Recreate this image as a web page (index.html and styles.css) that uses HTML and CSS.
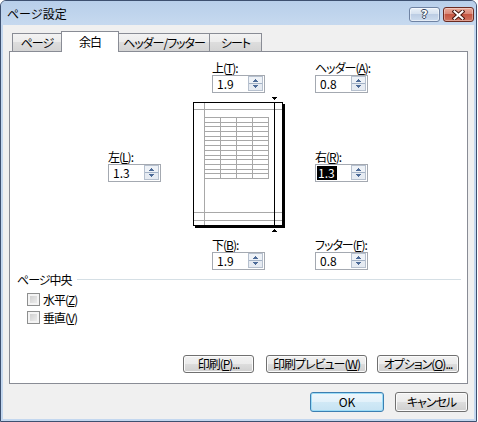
FILE: index.html
```html
<!DOCTYPE html>
<html lang="ja">
<head>
<meta charset="utf-8">
<title>ページ設定</title>
<link rel="stylesheet" href="styles.css">
</head>
<body>
<div class="window">
  <div class="titlebar">
    <span class="title">ページ設定</span>
    <div class="caption">
      <div class="cap-btn help"><span>?</span></div>
      <div class="cap-btn close">
        <svg width="13" height="10" viewBox="0 0 13 10">
          <path d="M2.5 1.5 L10.5 8.5 M10.5 1.5 L2.5 8.5" stroke="#4a1a12" stroke-width="4" stroke-linecap="square" fill="none"/>
          <path d="M2.5 1.5 L10.5 8.5 M10.5 1.5 L2.5 8.5" stroke="#fff" stroke-width="2" stroke-linecap="square" fill="none"/>
        </svg>
      </div>
    </div>
  </div>
  <div class="client">
    <div class="tabs">
      <div class="tab w-page">ページ</div>
      <div class="tab active w-margin">余白</div>
      <div class="tab w-hf">ヘッダー/フッター</div>
      <div class="tab w-sheet">シート</div>
    </div>
    <div class="panel">
      <div class="margins">
        <div class="field f-top">
          <div class="flabel">上(<u>T</u>):</div>
          <div class="inp"><span class="val">1.9</span>
            <svg class="spin" width="15" height="15" viewBox="0 0 15 15" shape-rendering="crispEdges"><rect x="0.5" y="0.5" width="14" height="14" fill="#e6ebf2" stroke="#b6c0ce"/><rect x="1" y="7" width="13" height="1" fill="#a3b2c6"/><rect x="1" y="1" width="13" height="6" fill="#eef2f7"/><rect x="7" y="3" width="1" height="1" fill="#4d6b98"/><rect x="6" y="4" width="3" height="1" fill="#4d6b98"/><rect x="5" y="5" width="5" height="1" fill="#4d6b98"/><rect x="5" y="9" width="5" height="1" fill="#4d6b98"/><rect x="6" y="10" width="3" height="1" fill="#4d6b98"/><rect x="7" y="11" width="1" height="1" fill="#4d6b98"/></svg>
          </div>
        </div>
        <div class="field f-header">
          <div class="flabel">ヘッダー(<u>A</u>):</div>
          <div class="inp"><span class="val">0.8</span>
            <svg class="spin" width="15" height="15" viewBox="0 0 15 15" shape-rendering="crispEdges"><rect x="0.5" y="0.5" width="14" height="14" fill="#e6ebf2" stroke="#b6c0ce"/><rect x="1" y="7" width="13" height="1" fill="#a3b2c6"/><rect x="1" y="1" width="13" height="6" fill="#eef2f7"/><rect x="7" y="3" width="1" height="1" fill="#4d6b98"/><rect x="6" y="4" width="3" height="1" fill="#4d6b98"/><rect x="5" y="5" width="5" height="1" fill="#4d6b98"/><rect x="5" y="9" width="5" height="1" fill="#4d6b98"/><rect x="6" y="10" width="3" height="1" fill="#4d6b98"/><rect x="7" y="11" width="1" height="1" fill="#4d6b98"/></svg>
          </div>
        </div>
        <div class="field f-left">
          <div class="flabel">左(<u>L</u>):</div>
          <div class="inp"><span class="val">1.3</span>
            <svg class="spin" width="15" height="15" viewBox="0 0 15 15" shape-rendering="crispEdges"><rect x="0.5" y="0.5" width="14" height="14" fill="#e6ebf2" stroke="#b6c0ce"/><rect x="1" y="7" width="13" height="1" fill="#a3b2c6"/><rect x="1" y="1" width="13" height="6" fill="#eef2f7"/><rect x="7" y="3" width="1" height="1" fill="#4d6b98"/><rect x="6" y="4" width="3" height="1" fill="#4d6b98"/><rect x="5" y="5" width="5" height="1" fill="#4d6b98"/><rect x="5" y="9" width="5" height="1" fill="#4d6b98"/><rect x="6" y="10" width="3" height="1" fill="#4d6b98"/><rect x="7" y="11" width="1" height="1" fill="#4d6b98"/></svg>
          </div>
        </div>
        <div class="preview">
          <svg width="92" height="138" viewBox="0 0 92 138" shape-rendering="crispEdges">
            <rect x="79" y="1" width="5" height="1" fill="#000"/>
            <rect x="80" y="2" width="3" height="1" fill="#000"/>
            <rect x="81" y="3" width="1" height="1" fill="#000"/>
            <rect x="2" y="8" width="90" height="124" fill="#000"/>
            <rect x="0.5" y="6.5" width="89" height="123" fill="#fff" stroke="#000"/>
            <g stroke="#a8a8a8" stroke-width="1" fill="none">
              <line x1="11.5" y1="7" x2="11.5" y2="129"/>
              <line x1="1" y1="13.5" x2="89" y2="13.5"/>
              <line x1="1" y1="116.5" x2="89" y2="116.5"/>
              <line x1="1" y1="124.5" x2="89" y2="124.5"/>
              <line x1="27.5" y1="21" x2="27.5" y2="83"/>
              <line x1="43.5" y1="21" x2="43.5" y2="83"/>
              <line x1="59.5" y1="21" x2="59.5" y2="83"/>
              <line x1="75.5" y1="21" x2="75.5" y2="83"/>
              <line x1="11" y1="21.5" x2="76" y2="21.5"/>
              <line x1="11" y1="26.5" x2="76" y2="26.5"/>
              <line x1="11" y1="30.5" x2="76" y2="30.5"/>
              <line x1="11" y1="35.5" x2="76" y2="35.5"/>
              <line x1="11" y1="40.5" x2="76" y2="40.5"/>
              <line x1="11" y1="44.5" x2="76" y2="44.5"/>
              <line x1="11" y1="49.5" x2="76" y2="49.5"/>
              <line x1="11" y1="54.5" x2="76" y2="54.5"/>
              <line x1="11" y1="59.5" x2="76" y2="59.5"/>
              <line x1="11" y1="63.5" x2="76" y2="63.5"/>
              <line x1="11" y1="68.5" x2="76" y2="68.5"/>
              <line x1="11" y1="73.5" x2="76" y2="73.5"/>
              <line x1="11" y1="77.5" x2="76" y2="77.5"/>
              <line x1="11" y1="82.5" x2="76" y2="82.5"/>
            </g>
            <line x1="81.5" y1="7" x2="81.5" y2="129" stroke="#000"/>
            <rect x="81" y="133" width="1" height="1" fill="#000"/>
            <rect x="80" y="134" width="3" height="1" fill="#000"/>
            <rect x="79" y="135" width="5" height="1" fill="#000"/>
          </svg>
        </div>
        <div class="field f-right">
          <div class="flabel">右(<u>R</u>):</div>
          <div class="inp"><span class="val sel">1.3</span>
            <svg class="spin" width="15" height="15" viewBox="0 0 15 15" shape-rendering="crispEdges"><rect x="0.5" y="0.5" width="14" height="14" fill="#e6ebf2" stroke="#b6c0ce"/><rect x="1" y="7" width="13" height="1" fill="#a3b2c6"/><rect x="1" y="1" width="13" height="6" fill="#eef2f7"/><rect x="7" y="3" width="1" height="1" fill="#4d6b98"/><rect x="6" y="4" width="3" height="1" fill="#4d6b98"/><rect x="5" y="5" width="5" height="1" fill="#4d6b98"/><rect x="5" y="9" width="5" height="1" fill="#4d6b98"/><rect x="6" y="10" width="3" height="1" fill="#4d6b98"/><rect x="7" y="11" width="1" height="1" fill="#4d6b98"/></svg>
          </div>
        </div>
        <div class="field f-bottom">
          <div class="flabel">下(<u>B</u>):</div>
          <div class="inp"><span class="val">1.9</span>
            <svg class="spin" width="15" height="15" viewBox="0 0 15 15" shape-rendering="crispEdges"><rect x="0.5" y="0.5" width="14" height="14" fill="#e6ebf2" stroke="#b6c0ce"/><rect x="1" y="7" width="13" height="1" fill="#a3b2c6"/><rect x="1" y="1" width="13" height="6" fill="#eef2f7"/><rect x="7" y="3" width="1" height="1" fill="#4d6b98"/><rect x="6" y="4" width="3" height="1" fill="#4d6b98"/><rect x="5" y="5" width="5" height="1" fill="#4d6b98"/><rect x="5" y="9" width="5" height="1" fill="#4d6b98"/><rect x="6" y="10" width="3" height="1" fill="#4d6b98"/><rect x="7" y="11" width="1" height="1" fill="#4d6b98"/></svg>
          </div>
        </div>
        <div class="field f-footer">
          <div class="flabel">フッター(<u>F</u>):</div>
          <div class="inp"><span class="val">0.8</span>
            <svg class="spin" width="15" height="15" viewBox="0 0 15 15" shape-rendering="crispEdges"><rect x="0.5" y="0.5" width="14" height="14" fill="#e6ebf2" stroke="#b6c0ce"/><rect x="1" y="7" width="13" height="1" fill="#a3b2c6"/><rect x="1" y="1" width="13" height="6" fill="#eef2f7"/><rect x="7" y="3" width="1" height="1" fill="#4d6b98"/><rect x="6" y="4" width="3" height="1" fill="#4d6b98"/><rect x="5" y="5" width="5" height="1" fill="#4d6b98"/><rect x="5" y="9" width="5" height="1" fill="#4d6b98"/><rect x="6" y="10" width="3" height="1" fill="#4d6b98"/><rect x="7" y="11" width="1" height="1" fill="#4d6b98"/></svg>
          </div>
        </div>
      </div>
      <div class="group"><span>ページ中央</span><div class="rule"></div></div>
      <div class="check c1"><span class="box"></span><span>水平(<u>Z</u>)</span></div>
      <div class="check c2"><span class="box"></span><span>垂直(<u>V</u>)</span></div>
      <div class="panel-buttons">
        <button class="btn b-print">印刷(<u>P</u>)...</button>
        <button class="btn b-preview">印刷プレビュー(<u>W</u>)</button>
        <button class="btn b-option">オプション(<u>O</u>)...</button>
      </div>
    </div>
    <div class="dialog-buttons">
      <button class="btn default b-ok">OK</button>
      <button class="btn b-cancel">キャンセル</button>
    </div>
  </div>
</div>
</body>
</html>
```

FILE: styles.css
```css
* { box-sizing: border-box; }
html, body { margin: 0; padding: 0; background: #fff; }
body {
  font-family: "Noto Sans CJK JP", sans-serif;
  font-size: 12px;
  color: #000;
  letter-spacing: -1px;
}
u { text-decoration: underline; text-underline-offset: 1px; }

.window {
  width: 477px;
  height: 422px;
  border: 1px solid #3d5070;
  border-radius: 6px 6px 0 0;
  background: #c3d7ef;
  display: flex;
  flex-direction: column;
  overflow: hidden;
}
.titlebar {
  height: 24px;
  flex: none;
  display: flex;
  align-items: flex-start;
  padding-left: 6px;
  background: linear-gradient(#b8cfea, #c6d9ef);
}
.title { margin-top: 5px; line-height: 16px; letter-spacing: 0; }
.caption { margin-left: auto; margin-top: 6px; margin-right: 2px; display: flex; gap: 3px; }
.cap-btn {
  width: 31px;
  height: 15px;
  border-radius: 3px;
  display: flex;
  align-items: center;
  justify-content: center;
}
.help {
  border: 1px solid #6f83a3;
  background: linear-gradient(#eaf1f9, #d3dfee 50%, #bccde4 50%, #cddcee);
  box-shadow: inset 0 0 0 1px rgba(255,255,255,0.5);
}
.help span {
  color: #fff;
  font-family: "DejaVu Sans", sans-serif;
  font-weight: bold;
  font-size: 11px;
  line-height: 12px;
  letter-spacing: 0;
  text-shadow: 1px 0 #38475e, -1px 0 #38475e, 0 1px #38475e, 0 -1px #38475e;
}
.close {
  border: 1px solid #6a2b22;
  background: linear-gradient(#eaab9b, #d98878 45%, #c55642 50%, #d0735f);
  box-shadow: inset 0 0 0 1px rgba(255,255,255,0.35);
}
.close svg { display: block; }

.client {
  flex: 1;
  margin: 0 2px 2px;
  background: #f0f0f0;
  padding: 6px 6px 0;
  display: flex;
  flex-direction: column;
}

.tabs { display: flex; align-items: flex-end; height: 20px; padding-left: 3px; flex: none; }
.tab {
  height: 18px;
  border: 1px solid #898c95;
  border-bottom: none;
  background: linear-gradient(#f3f3f3, #ebebeb 50%, #dddddd 50%, #d4d4d4);
  text-align: center;
  line-height: 17px;
  white-space: nowrap;
  font-feature-settings: "palt";
}
.tab + .tab { margin-left: -1px; }
.tab.active {
  height: 21px;
  margin-bottom: -1px;
  background: #fff;
  position: relative;
  z-index: 1;
  padding-top: 1px;
}
.w-page { width: 50px; }
.w-margin { width: 58px; }
.w-hf { width: 92px; }
.w-sheet { width: 53px; }

.panel {
  height: 333px;
  flex: none;
  border: 1px solid #898c95;
  background: #fff;
  display: flex;
  flex-direction: column;
}

.margins {
  display: grid;
  grid-template-columns: 53px 32px 92px 30px 53px;
  grid-template-rows: 32px 145px 33px;
  margin-top: 9px;
  padding-left: 98px;
}
.field { display: flex; flex-direction: column; gap: 1px; }
.flabel { line-height: 13px; white-space: nowrap; font-feature-settings: "palt"; }
.inp {
  width: 53px;
  height: 18px;
  border: 1px solid #a4a9b1;
  background: #fff;
  display: flex;
  align-items: center;
  padding-left: 4px;
}
.val { line-height: 14px; letter-spacing: 0; }
.val.sel { background: #000; color: #fff; margin-left: -3px; padding: 0 2px 0 1px; }
.spin { margin-left: auto; margin-right: 1px; align-self: flex-start; display: block; }

.f-top { grid-column: 3; grid-row: 1; padding-left: 19px; }
.f-header { grid-column: 5; grid-row: 1; }
.f-left { grid-column: 1; grid-row: 2; align-self: center; }
.preview { grid-column: 3; grid-row: 2; padding-top: 3px; }
.preview svg { display: block; }
.f-right { grid-column: 5; grid-row: 2; align-self: center; }
.f-bottom { grid-column: 3; grid-row: 3; padding-left: 19px; }
.f-footer { grid-column: 5; grid-row: 3; }

.group {
  display: flex;
  align-items: center;
  height: 13px;
  line-height: 13px;
  margin-top: 2px;
  padding-left: 7px;
  padding-right: 6px;
  font-feature-settings: "palt";
}
.group .rule { flex: 1; height: 1px; background: #d5dfe5; margin-left: 5px; }

.check {
  display: flex;
  align-items: center;
  height: 13px;
  line-height: 13px;
  margin-left: 17px;
  gap: 3px;
}
.c1 { margin-top: 7px; }
.c2 { margin-top: 5px; }
.box {
  width: 13px;
  height: 13px;
  border: 1px solid #8e8f8f;
  background: linear-gradient(135deg, #c8c8c8, #f4f4f4);
  box-shadow: inset 0 0 0 2px #f4f4f4;
}

.btn {
  font-family: "Noto Sans CJK JP", sans-serif;
  font-size: 12px;
  letter-spacing: -1px;
  color: #000;
  padding: 0;
  margin: 0;
  border: 1px solid #707070;
  border-radius: 3px;
  background: linear-gradient(#f2f2f2, #ebebeb 50%, #dddddd 50%, #cfcfcf);
  box-shadow: inset 0 0 0 1px #fbfbfb;
  display: flex;
  align-items: center;
  justify-content: center;
  line-height: 14px;
  white-space: nowrap;
  font-feature-settings: "palt";
}
.panel-buttons {
  margin-top: auto;
  padding-bottom: 10px;
  padding-right: 8px;
  display: flex;
  justify-content: flex-end;
}
.panel-buttons .btn { height: 18px; }
.b-print { width: 71px; margin-right: 12px; }
.b-preview { width: 101px; margin-right: 10px; }
.b-option { width: 82px; }

.dialog-buttons {
  display: flex;
  justify-content: flex-end;
  gap: 11px;
  margin-top: 8px;
}
.dialog-buttons .btn { height: 20px; }
.b-ok { width: 74px; letter-spacing: 0; }
.b-cancel { width: 73px; }
.btn.default {
  border-color: #3c7fb1;
  box-shadow: inset 0 0 0 1px #9bdcf7;
  background: linear-gradient(#eef7fc, #e2f1fa 50%, #d1e9f6 50%, #c6e3f3);
}
```
